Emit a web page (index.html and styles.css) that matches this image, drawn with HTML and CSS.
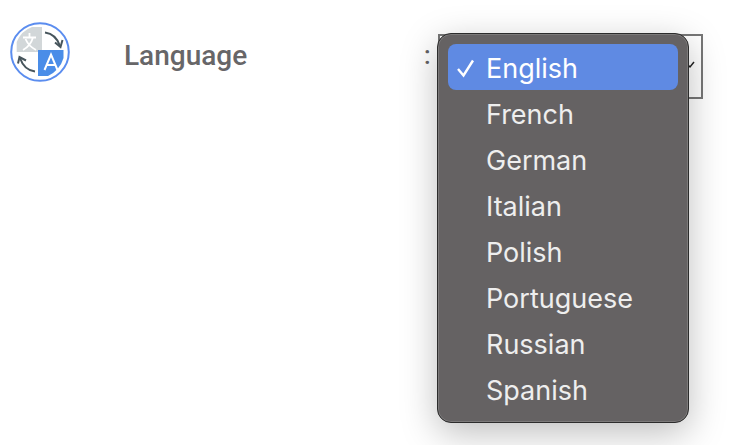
FILE: index.html
```html
<!DOCTYPE html>
<html lang="en">
<head>
<meta charset="utf-8">
<title>Language</title>
<link rel="stylesheet" href="styles.css">
</head>
<body>
<div class="row">
  <svg class="icon" width="60" height="60" viewBox="0 0 60 60" aria-hidden="true">
    <circle cx="30" cy="30" r="28.800" fill="#fff" stroke="#5b8def" stroke-width="2"/>
    <path d="M6.700 30 V20 Q11 9 22 5 H32 V30 Z" fill="#d2d7d9"/>
    <path d="M28 28 H53.500 V36 Q50 48 38 54 H28 Z" fill="#4a8de8"/>
    <path d="M13 15.500 H26 M19.500 11 V15.500 M23 15.500 Q20.500 24 13 28 M15.500 17 Q18.500 24 26 28" fill="none" stroke="#fff" stroke-width="1.800"/>
    <path d="M34.500 48 L41 32.500 L47.500 48 M36.800 43 H45.200" fill="none" stroke="#fff" stroke-width="2"/>
    <path d="M35 10.500 Q46 12 50 24" fill="none" stroke="#47555c" stroke-width="2"/>
    <path d="M45 20.500 L50.500 25 L52.500 18" fill="none" stroke="#47555c" stroke-width="2"/>
    <path d="M25 49.500 Q14 48 10 36" fill="none" stroke="#47555c" stroke-width="2"/>
    <path d="M8 41.500 L9.500 35 L16 38.500" fill="none" stroke="#47555c" stroke-width="2"/>
  </svg>
  <span class="label">Language</span>
  <span class="colon">:</span>
  <div class="select">
    <svg class="chevron" width="10" height="8" viewBox="0 0 10 8" aria-hidden="true"><path d="M1 3 L4 6 L8 1" fill="none" stroke="#222" stroke-width="1.500"/></svg>
    <ul class="menu">
      <li class="item selected">
        <svg class="check" width="20" height="20" viewBox="0 0 20 20" aria-hidden="true"><path d="M2 11 L7.500 17.500 L17 2.500" fill="none" stroke="#fff" stroke-width="2.400"/></svg>
        English
      </li>
      <li class="item">French</li>
      <li class="item">German</li>
      <li class="item">Italian</li>
      <li class="item">Polish</li>
      <li class="item">Portuguese</li>
      <li class="item">Russian</li>
      <li class="item">Spanish</li>
    </ul>
  </div>
</div>
</body>
</html>
```
FILE: styles.css
```css
html, body {
  margin: 0;
  height: 100%;
  background: #fff;
  overflow: hidden;
}
body {
  font-family: Inter, "Liberation Sans", sans-serif;
}
.row {
  display: flex;
  align-items: flex-start;
  padding: 22px 0 0 10px;
}
.icon {
  flex: none;
}
.label {
  margin: 18px 0 0 54px;
  width: 300px;
  font-family: Roboto, sans-serif;
  font-size: 28px;
  line-height: 32px;
  font-weight: 500;
  color: #676668;
}
.colon {
  margin-top: 18px;
  width: 14px;
  font-family: Roboto, sans-serif;
  font-size: 25px;
  line-height: 32px;
  font-weight: 500;
  color: #636264;
}
.select {
  position: relative;
  margin-top: 12px;
  width: 265px;
  height: 65px;
  box-sizing: border-box;
  border: 2px solid #777;
  display: flex;
  justify-content: flex-end;
  align-items: center;
}
.chevron {
  margin: 0 5px 3px 0;
}
.menu {
  position: absolute;
  left: -3px;
  top: -3px;
  width: 252px;
  height: 390px;
  box-sizing: border-box;
  margin: 0;
  padding: 10px;
  list-style: none;
  background: #656263;
  border: 1px solid #2c2c2c;
  box-shadow: inset 0 0 0 1px #7c7a7a, 0 10px 36px rgba(0, 0, 0, 0.26);
  border-radius: 14px;
  display: flex;
  flex-direction: column;
}
.item {
  flex: none;
  position: relative;
  height: 46px;
  line-height: 50px;
  padding-left: 38px;
  font-size: 27px;
  color: #eeeeee;
  border-radius: 8px;
}
.selected {
  background: #5f8ae3;
  color: #fff;
}
.check {
  position: absolute;
  left: 8px;
  top: 14px;
}
```
